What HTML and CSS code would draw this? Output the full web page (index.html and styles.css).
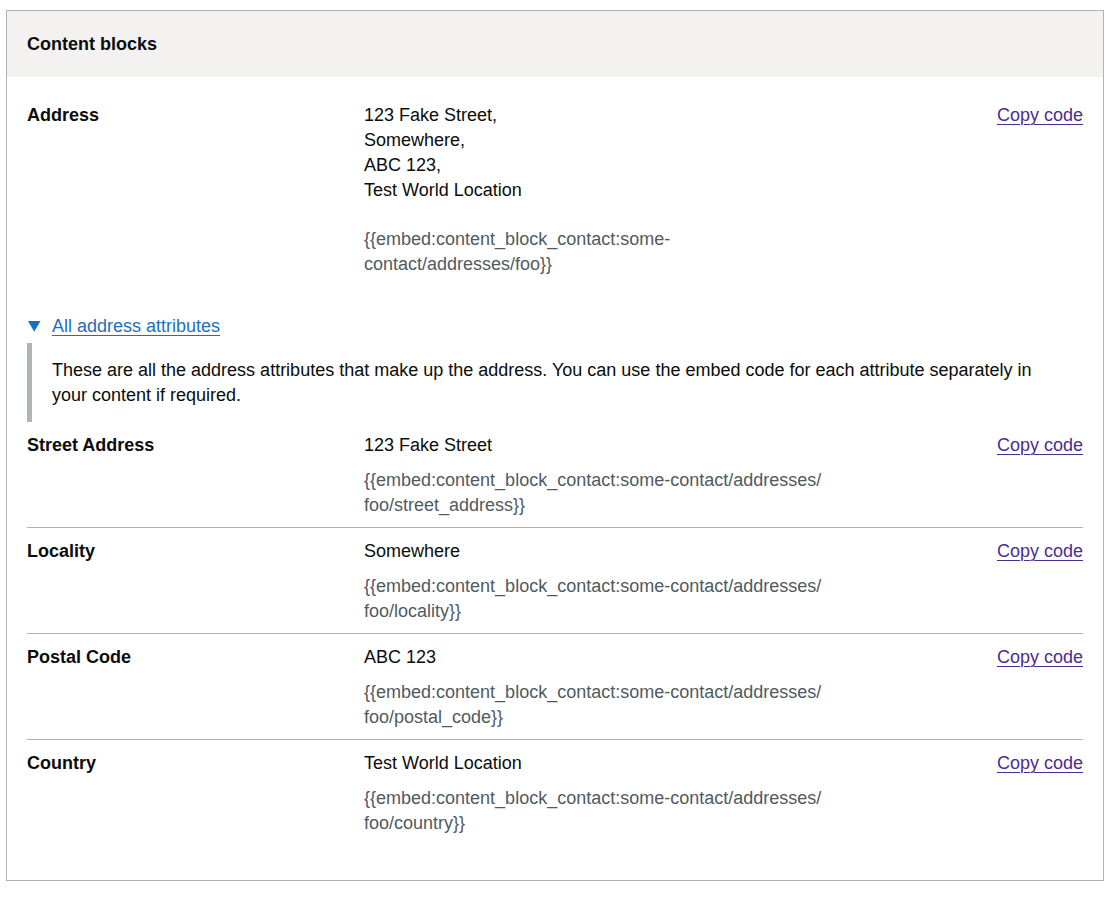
FILE: index.html
```html
<!DOCTYPE html>
<html lang="en">
<head>
<meta charset="utf-8">
<title>Content blocks</title>
<link rel="stylesheet" href="styles.css">
</head>
<body>
<div class="card">
  <div class="card-title">
    <h2>Content blocks</h2>
  </div>
  <div class="card-content">
    <div class="row row-main">
      <dt class="key">Address</dt>
      <dd class="value">
        <p class="lines">123 Fake Street,<br>Somewhere,<br>ABC 123,<br>Test World Location</p>
        <p class="embed embed-main">{{embed:content_block_contact:some-<br>contact/addresses/foo}}</p>
      </dd>
      <dd class="actions"><a href="#" class="link">Copy code</a></dd>
    </div>

    <details class="details" open>
      <summary class="summary">
        <svg class="tri" width="13" height="11" viewBox="0 0 13 11" aria-hidden="true"><polygon points="0,0 12.5,0 6.25,10.8" fill="#1d70b8"/></svg>
        <span class="summary-text">All address attributes</span>
      </summary>
      <div class="details-text">
        These are all the address attributes that make up the address. You can use the embed code for each attribute separately in your content if required.
      </div>
    </details>

    <div class="row">
      <dt class="key">Street Address</dt>
      <dd class="value">
        <p class="lines">123 Fake Street</p>
        <p class="embed">{{embed:content_block_contact:some-contact/addresses/ foo/street_address}}</p>
      </dd>
      <dd class="actions"><a href="#" class="link">Copy code</a></dd>
    </div>
    <div class="row">
      <dt class="key">Locality</dt>
      <dd class="value">
        <p class="lines">Somewhere</p>
        <p class="embed">{{embed:content_block_contact:some-contact/addresses/ foo/locality}}</p>
      </dd>
      <dd class="actions"><a href="#" class="link">Copy code</a></dd>
    </div>
    <div class="row">
      <dt class="key">Postal Code</dt>
      <dd class="value">
        <p class="lines">ABC 123</p>
        <p class="embed">{{embed:content_block_contact:some-contact/addresses/ foo/postal_code}}</p>
      </dd>
      <dd class="actions"><a href="#" class="link">Copy code</a></dd>
    </div>
    <div class="row row-last">
      <dt class="key">Country</dt>
      <dd class="value">
        <p class="lines">Test World Location</p>
        <p class="embed">{{embed:content_block_contact:some-contact/addresses/ foo/country}}</p>
      </dd>
      <dd class="actions"><a href="#" class="link">Copy code</a></dd>
    </div>
  </div>
</div>
</body>
</html>
```

FILE: styles.css
```css
* { box-sizing: border-box; }

body {
  margin: 0;
  padding: 10px 14px 0 6px;
  font-family: "Liberation Sans", Arial, sans-serif;
  font-size: 18px;
  line-height: 25px;
  color: #0b0c0c;
  background: #ffffff;
}

.card {
  width: 1098px;
  border: 1px solid #b1b4b6;
}

.card-title {
  background: #f3f2f1;
  padding: 21px 20px 19px;
  height: 66px;
}

.card-title h2 {
  margin: 0;
  font-size: 18px;
  line-height: 25px;
  font-weight: 700;
}

.card-content {
  padding: 16px 20px 35px;
}

.row {
  display: grid;
  grid-template-columns: 317px 528px 1fr;
  column-gap: 20px;
  padding: 11px 0 9px;
  border-bottom: 1px solid #b1b4b6;
}

.row-main {
  padding: 10px 0;
}

.row-main,
.row-last {
  border-bottom: none;
}

.key {
  margin: 0;
  font-weight: 700;
}

.value {
  margin: 0;
}

.lines {
  margin: 0;
}

.embed {
  margin: 10px 0 0;
  color: #505a5f;
}

.embed-main {
  margin-top: 24px;
}

.actions {
  margin: 0;
  text-align: right;
}

.link {
  color: #4c2c92;
  text-decoration: underline;
  text-decoration-thickness: 1px;
  text-underline-offset: 3px;
}

.details {
  margin-top: 27px;
}

.summary {
  display: flex;
  align-items: center;
  list-style: none;
  cursor: pointer;
  color: #1d70b8;
  padding-left: 1px;
  margin-bottom: 4px;
}

.summary::-webkit-details-marker { display: none; }

.tri {
  display: block;
  margin-right: 11px;
}

.summary-text {
  text-decoration: underline;
  text-decoration-thickness: 1px;
  text-underline-offset: 3px;
}

.details-text {
  border-left: 5px solid #b1b4b6;
  padding: 15px 15px 14px 20px;
}
```
